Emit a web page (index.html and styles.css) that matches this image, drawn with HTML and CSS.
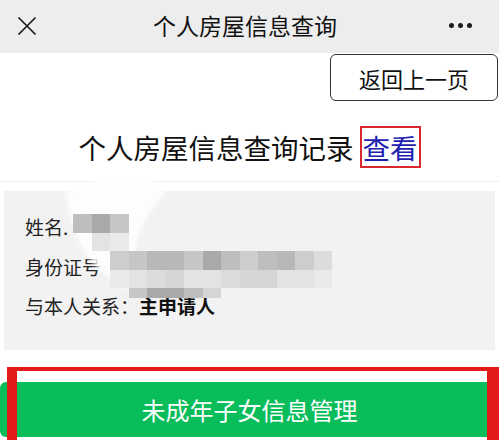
FILE: index.html
```html
<!DOCTYPE html>
<html lang="zh-CN">
<head>
<meta charset="utf-8">
<title>个人房屋信息查询</title>
<link rel="stylesheet" href="styles.css">
</head>
<body>
<div class="page">
  <header class="topbar">
    <svg class="close" width="20" height="20" viewBox="0 0 20 20"><path d="M1.5 1.5 L18.5 18.5 M18.5 1.5 L1.5 18.5" stroke="#1a1a1a" stroke-width="1.7" fill="none"/></svg>
    <div class="title">个人房屋信息查询</div>
    <div class="more"><span></span><span></span><span></span></div>
  </header>

  <div class="back-row">
    <button class="back-btn">返回上一页</button>
  </div>

  <div class="heading">
    <span class="heading-text">个人房屋信息查询记录</span><span class="view-link">查看</span>
  </div>

  <section class="info">
    <div class="row">姓名.</div>
    <div class="row">身份证号</div>
    <div class="row">与本人关系：<b class="rel">主申请人</b></div>

    <svg class="swoosh" width="110" height="130" viewBox="0 0 110 130"><path d="M6 27 C30 18 55 8 70 3 C85 10 98 20 105 27 C92 45 80 60 76 80 C72 100 74 115 75 127 C60 122 40 108 28 92 C16 75 8 50 6 27 Z" fill="#ffffff" opacity="0.85"/></svg>

    <div class="mosaic">
      <i class="c0 s3"></i><i class="c1 s1"></i><i class="c2 s4"></i>
    </div>
    <div class="mosaic r1">
      <i class="c1 s8"></i><i class="c2 s9"></i>
    </div>
    <div class="mosaic r2">
      <i class="c2 s5"></i><i class="s4"></i><i class="s2"></i><i class="s2"></i><i class="s4"></i><i class="s1"></i><i class="s3"></i><i class="s5"></i><i class="s3"></i><i class="s2"></i><i class="s5"></i><i class="s7"></i>
    </div>
    <div class="mosaic r3">
      <i class="c2 s9"></i><i class="s8"></i><i class="s7"></i><i class="s6"></i><i class="s8"></i><i class="s8"></i><i class="s7"></i><i class="s6"></i><i class="s6"></i><i class="s8"></i><i class="s8"></i><i class="s9"></i>
    </div>
    <div class="mosaic r4">
      <i class="c3 s4"></i><i class="s1"></i><i class="s1"></i><i class="s3"></i><i class="s6"></i>
    </div>
  </section>

  <div class="action">
    <button class="green-btn">未成年子女信息管理</button>
  </div>
  <div class="red-frame"></div>
</div>
</body>
</html>
```

FILE: styles.css
```css
html, body {
  margin: 0;
  padding: 0;
  overflow: hidden;
  background: #ffffff;
}
.page {
  position: relative;
  width: 499px;
  height: 440px;
  overflow: hidden;
  font-family: "Noto Sans CJK SC", "Noto Sans", sans-serif;
  color: #1a1a1a;
}
.topbar {
  height: 53px;
  background: #ededed;
  display: flex;
  align-items: center;
  justify-content: space-between;
  padding: 0 27px 0 17px;
  box-sizing: border-box;
}
.close {
  display: block;
  margin-top: -1px;
}
.title {
  font-size: 23px;
  line-height: 30px;
  color: #111;
  margin-left: 4px;
  margin-top: -3px;
}
.more {
  display: flex;
  gap: 4px;
  margin-top: -2px;
}
.more span {
  width: 5px;
  height: 5px;
  border-radius: 50%;
  background: #1a1a1a;
}
.back-row {
  display: flex;
  justify-content: flex-end;
  padding: 1px 1px 0 0;
}
.back-btn {
  width: 168px;
  height: 47px;
  border: 1.5px solid #333;
  border-radius: 6px;
  background: #fff;
  font-family: inherit;
  font-size: 22px;
  color: #111;
  padding: 0;
  line-height: 44px;
}
.heading {
  display: flex;
  justify-content: center;
  align-items: center;
  padding: 25px 0 13px;
  border-bottom: 1px solid #efefef;
  font-size: 27.5px;
  color: #111;
}
.heading-text {
  line-height: 42px;
}
.view-link {
  display: inline-block;
  margin-left: 6px;
  padding: 0 1px;
  border: 2px solid #d8282d;
  color: #2121b0;
  line-height: 38px;
}
.info {
  position: relative;
  margin: 9px 4px 0;
  height: 159px;
  box-sizing: border-box;
  padding: 16px 0 0 21px;
  background: #f2f2f2;
  font-size: 19px;
  color: #222;
}
.row {
  height: 39.5px;
  line-height: 39.5px;
}
.rel {
  font-weight: 700;
  color: #111;
}
.swoosh {
  position: absolute;
  left: 56px;
  top: -26px;
  filter: blur(2px);
}
.mosaic {
  position: absolute;
  left: 69px;
  top: 23px;
  display: grid;
  grid-template-columns: repeat(14, 18.5px);
  grid-auto-rows: 18.5px;
}
.mosaic.r1 { top: 41.5px; }
.mosaic.r2 { top: 60px; }
.mosaic.r3 { top: 78.5px; }
.mosaic.r4 { top: 97px; grid-auto-rows: 10px; }
.c0 { grid-column: 1; }
.c1 { grid-column: 2; }
.c2 { grid-column: 3; }
.c3 { grid-column: 4; }
.s1 { background: #a9a9a9; }
.s2 { background: #b8b8b8; }
.s3 { background: #bebebe; }
.s4 { background: #c6c6c6; }
.s5 { background: #cdcdcd; }
.s6 { background: #d5d5d5; }
.s7 { background: #dcdcdc; }
.s8 { background: #e3e3e3; }
.s9 { background: #eaeaea; }
.action {
  margin-top: 32px;
}
.green-btn {
  display: block;
  width: 100%;
  height: 55px;
  border: none;
  border-radius: 6px;
  background: #09bd5b;
  color: #fff;
  font-family: inherit;
  font-size: 24px;
  padding: 0;
}
.red-frame {
  position: absolute;
  left: 7px;
  top: 367px;
  width: 492px;
  height: 80px;
  box-sizing: border-box;
  border-top: 4px solid #e31b1b;
  border-left: 10px solid #e31b1b;
  border-right: 12px solid #e31b1b;
}
```
